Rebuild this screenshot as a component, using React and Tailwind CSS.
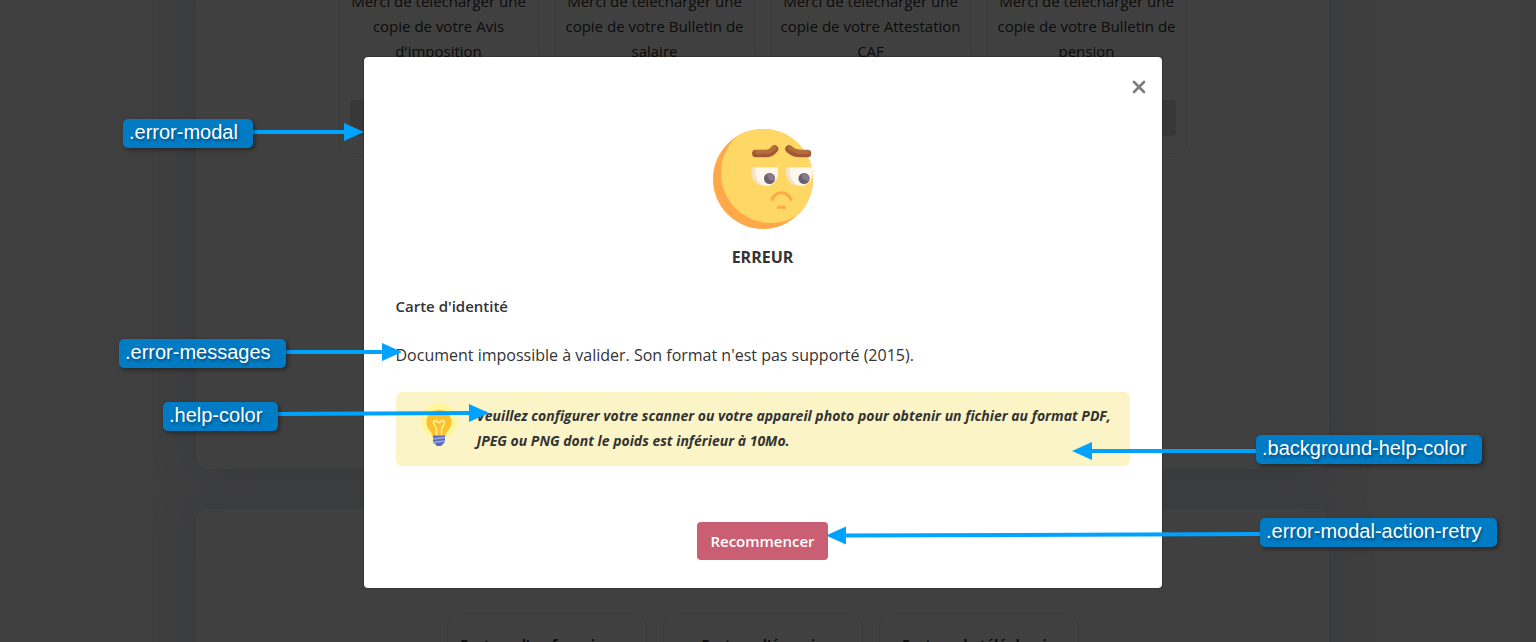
import React from "react";

const documents = [
  "Merci de télécharger une copie de votre Avis d'imposition",
  "Merci de télécharger une copie de votre Bulletin de salaire",
  "Merci de télécharger une copie de votre Attestation CAF",
  "Merci de télécharger une copie de votre Bulletin de pension",
];

const proofs = ["Facture d'un fournisseur", "Facture d'énergie", "Facture de téléphonie"];

function SadFace() {
  return (
    <svg viewBox="0 0 100 100" className="size-[100px]" role="img" aria-label="Visage triste">
      <defs>
        <clipPath id="face">
          <circle cx="50" cy="50" r="50" />
        </clipPath>
      </defs>
      <g clipPath="url(#face)">
        <rect width="100" height="100" fill="#ffa84a" />
        <circle cx="58" cy="44" r="50" fill="#ffd764" />
        <path d="M38.500 38.500H65V43C65 51 60 57 52 57C44 57 38.500 51 38.500 43Z" fill="#f3e6c8" />
        <path d="M42.500 38.500H65V43C65 51 60 57 53 57C46 55 42.500 50 42.500 43Z" fill="#fdf7ec" />
        <path d="M73 38.500H100V43C100 51 94 57 86.500 57C78.500 57 73 51 73 43Z" fill="#f3e6c8" />
        <path d="M77 38.500H100V43C100 51 94 57 87.500 57C80.500 55 77 50 77 43Z" fill="#fdf7ec" />
        <circle cx="56.500" cy="49.500" r="5.500" fill="#6b5e6e" />
        <path d="M54 44.600C54.500 50 57 52.500 61.500 51.800A5.500 5.500 0 0 0 54 44.600Z" fill="#877b8a" />
        <circle cx="91" cy="49.500" r="5.500" fill="#6b5e6e" />
        <path d="M88.500 44.600C89 50 91.500 52.500 96 51.800A5.500 5.500 0 0 0 88.500 44.600Z" fill="#877b8a" />
      </g>
      <path d="M59 70.500C63 61.500 74 61.500 78 70.500" fill="none" stroke="#ffa84a" strokeWidth="3" strokeLinecap="round" />
      <path d="M65.500 78.500Q68.500 77.500 71.500 78.500" fill="none" stroke="#ffa84a" strokeWidth="3" strokeLinecap="round" />
      <path d="M42.800 24.600H52C57.500 24.600 59 23 61.500 20" fill="none" stroke="#a35a33" strokeWidth="7.500" strokeLinecap="round" />
      <path d="M44 23H52C57.500 23 59.500 21 61.500 18.500" fill="none" stroke="#b56c3f" strokeWidth="4" strokeLinecap="round" />
      <path d="M94.500 24.600H87C81.500 24.600 79 23 76 20" fill="none" stroke="#a35a33" strokeWidth="7.500" strokeLinecap="round" />
      <path d="M94.500 23H87C82.500 23 80 21 77 18.500" fill="none" stroke="#b56c3f" strokeWidth="4" strokeLinecap="round" />
    </svg>
  );
}

function Bulb() {
  return (
    <svg viewBox="0 0 36 44" className="h-11 w-9 shrink-0" aria-hidden="true">
      <circle cx="18" cy="18" r="18" fill="#fff59d" />
      <path d="M18 7C10.500 7 5.500 12.500 5.500 19.500C5.500 26 11 28 12 34H24C25 28 30.500 26 30.500 19.500C30.500 12.500 25.500 7 18 7Z" fill="#fbc02d" />
      <path d="M15.500 34V26L12.500 20Q12.500 17 15 17.500Q17 20.500 18 19Q19 20.500 21 17.500Q23.500 17 23.500 20L20.500 26V34" fill="none" stroke="#fff59d" strokeWidth="1.500" strokeLinejoin="round" />
      <path d="M12 32.500H24V39L20 43H16L12 39Z" fill="#5c6bc0" />
      <path d="M12 36L24 34.500M12 39.500L24 38" stroke="#9fa8da" strokeWidth="1.500" />
    </svg>
  );
}

/* Arrow drawn from (x1, y1) to the tip at (x2, y2). */
function Arrow({ x1, y1, x2, y2 }) {
  const back = x2 > x1 ? x2 - 20 : x2 + 20;
  return (
    <g>
      <line x1={x1} y1={y1} x2={back} y2={y2} stroke="#00a2ff" strokeWidth="4" />
      <polygon points={`${x2},${y2} ${back},${y2 - 9} ${back},${y2 + 9}`} fill="#00a2ff" />
    </g>
  );
}

function Callout({ className, children }) {
  return (
    <span
      className={`absolute h-[29px] rounded-[5px] bg-[#007bc4] pl-1.5 font-['Liberation_Sans',sans-serif] text-xl leading-[27px] whitespace-nowrap text-white shadow-[2px_2px_4px_rgba(0,0,0,0.4)] [text-shadow:1px_2px_3px_rgba(0,0,0,0.4)] ${className}`}
    >
      {children}
    </span>
  );
}

function Page() {
  return (
    <main className="absolute inset-0 overflow-hidden bg-[#f9f9fd] pr-[11px] text-[#333]">
      <div className="mx-auto flex w-full max-w-[1133px] flex-col gap-10">
        <section className="-mt-10 h-[509px] rounded-xl bg-white shadow-[0_0_40px_rgba(150,170,190,0.35)]">
          <div className="flex justify-center gap-4">
            {documents.map((text) => (
              <article key={text} className="flex h-[197px] w-[200px] flex-col justify-between rounded-xl border border-[#e9e9e9] px-2.5 pt-7 pb-5 text-center text-[15px] leading-[25px]">
                <p className="-mx-2">{text}</p>
                <button type="button" aria-label="Télécharger" className="h-9 w-full rounded bg-[#e0e0e0]" />
              </article>
            ))}
          </div>
        </section>
        <section className="h-[400px] rounded-xl bg-white pt-[104px] shadow-[0_0_40px_rgba(150,170,190,0.35)]">
          <div className="flex justify-center gap-4">
            {proofs.map((title) => (
              <article key={title} className="h-[200px] w-[200px] rounded-xl border border-[#e9e9e9] pt-[18px] text-center text-[14px] leading-[25px] font-bold">
                <h3>{title}</h3>
              </article>
            ))}
          </div>
        </section>
      </div>
    </main>
  );
}

export default function App() {
  return (
    <div className="relative h-screen min-h-[642px] overflow-hidden font-['Open_Sans',sans-serif]">
      <Page />
      <div className="absolute inset-0 flex items-start justify-center bg-black/75 pt-[57px] pr-[11px]">
        <div role="dialog" aria-modal="true" aria-labelledby="error-title" className="relative flex w-full max-w-[798px] flex-col rounded bg-white px-8 pt-[72px] pb-7 text-base leading-[25px] text-[#333] shadow-[0_0_2px_rgba(0,0,0,0.6)]">
          <button type="button" aria-label="Fermer" className="absolute top-[23px] right-4 flex size-[14px] items-center justify-center">
            <svg viewBox="0 0 14 14" className="size-[14px]" aria-hidden="true">
              <path d="M2 2L12 12M12 2L2 12" stroke="#7d7d7d" strokeWidth="2.600" strokeLinecap="round" />
            </svg>
          </button>
          <div className="flex justify-center">
            <SadFace />
          </div>
          <h2 id="error-title" className="mt-4 text-center font-bold">ERREUR</h2>
          <h3 className="mt-6 text-[15px] leading-[25px] font-semibold">Carte d'identité</h3>
          <p className="mt-6">Document impossible à valider. Son format n'est pas supporté (2015).</p>
          <div className="mt-6 flex min-h-[74px] gap-5 rounded-md bg-[#fbf4c7] pt-[11px] pr-3 pb-3 pl-[25px]">
            <Bulb />
            <p className="text-[14px] leading-[25px] font-bold italic">
              Veuillez configurer votre scanner ou votre appareil photo pour obtenir un fichier au format PDF,
              JPEG ou PNG dont le poids est inférieur à 10Mo.
            </p>
          </div>
          <button type="button" className="mt-14 h-[38px] self-center rounded bg-[#ca5f73] px-[13px] text-[15px] font-semibold text-white">Recommencer</button>
        </div>
      </div>
      <svg viewBox="0 0 1536 642" className="pointer-events-none absolute top-0 left-0 h-[642px] w-[1536px]" aria-hidden="true">
        <Arrow x1={252} y1={132} x2={364} y2={132} />
        <Arrow x1={285} y1={352} x2={402} y2={352} />
        <Arrow x1={277} y1={414} x2={489} y2={413} />
        <Arrow x1={1257} y1={451} x2={1072} y2={451} />
        <Arrow x1={1261} y1={534} x2={826} y2={535.5} />
      </svg>
      <Callout className="top-[119px] left-[123px] w-[130px]">.error-modal</Callout>
      <Callout className="top-[339px] left-[119px] w-[167px]">.error-messages</Callout>
      <Callout className="top-[402px] left-[163px] w-[115px]">.help-color</Callout>
      <Callout className="top-[435px] left-[1256px] w-[226px]">.background-help-color</Callout>
      <Callout className="top-[518px] left-[1260px] w-[237px]">.error-modal-action-retry</Callout>
    </div>
  );
}
